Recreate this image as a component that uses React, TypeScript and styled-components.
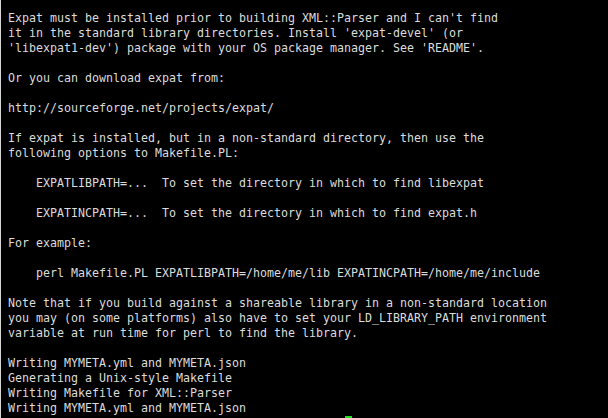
import React from "react";
import styled, { createGlobalStyle } from "styled-components";

const Global = createGlobalStyle`
  html, body {
    margin: 0;
    padding: 0;
    background: #000;
    width: 608px;
    height: 418px;
    overflow: hidden;
  }
`;

const Terminal = styled.div`
  position: relative;
  width: 608px;
  height: 418px;
  box-sizing: border-box;
  background: #000;
  border-left: 1px solid #d4d4d4;
  padding: 11px 0 0 7px;
  overflow: hidden;
`;

const Output = styled.pre`
  margin: 0;
  font-family: "DejaVu Sans Mono", "Liberation Mono", monospace;
  font-size: 11.63px;
  line-height: 15px;
  color: #dcdcdc;
  white-space: pre;
`;

const Cursor = styled.div`
  position: absolute;
  left: 344px;
  top: 416px;
  width: 7px;
  height: 2px;
  background: #22e022;
`;

const text = `Expat must be installed prior to building XML::Parser and I can't find
it in the standard library directories. Install 'expat-devel' (or
'libexpat1-dev') package with your OS package manager. See 'README'.

Or you can download expat from:

http://sourceforge.net/projects/expat/

If expat is installed, but in a non-standard directory, then use the
following options to Makefile.PL:

    EXPATLIBPATH=...  To set the directory in which to find libexpat

    EXPATINCPATH=...  To set the directory in which to find expat.h

For example:

    perl Makefile.PL EXPATLIBPATH=/home/me/lib EXPATINCPATH=/home/me/include

Note that if you build against a shareable library in a non-standard location
you may (on some platforms) also have to set your LD_LIBRARY_PATH environment
variable at run time for perl to find the library.

Writing MYMETA.yml and MYMETA.json
Generating a Unix-style Makefile
Writing Makefile for XML::Parser
Writing MYMETA.yml and MYMETA.json`;

export default function App() {
  return (
    <>
      <Global />
      <Terminal>
        <Output>{text}</Output>
        <Cursor />
      </Terminal>
    </>
  );
}
